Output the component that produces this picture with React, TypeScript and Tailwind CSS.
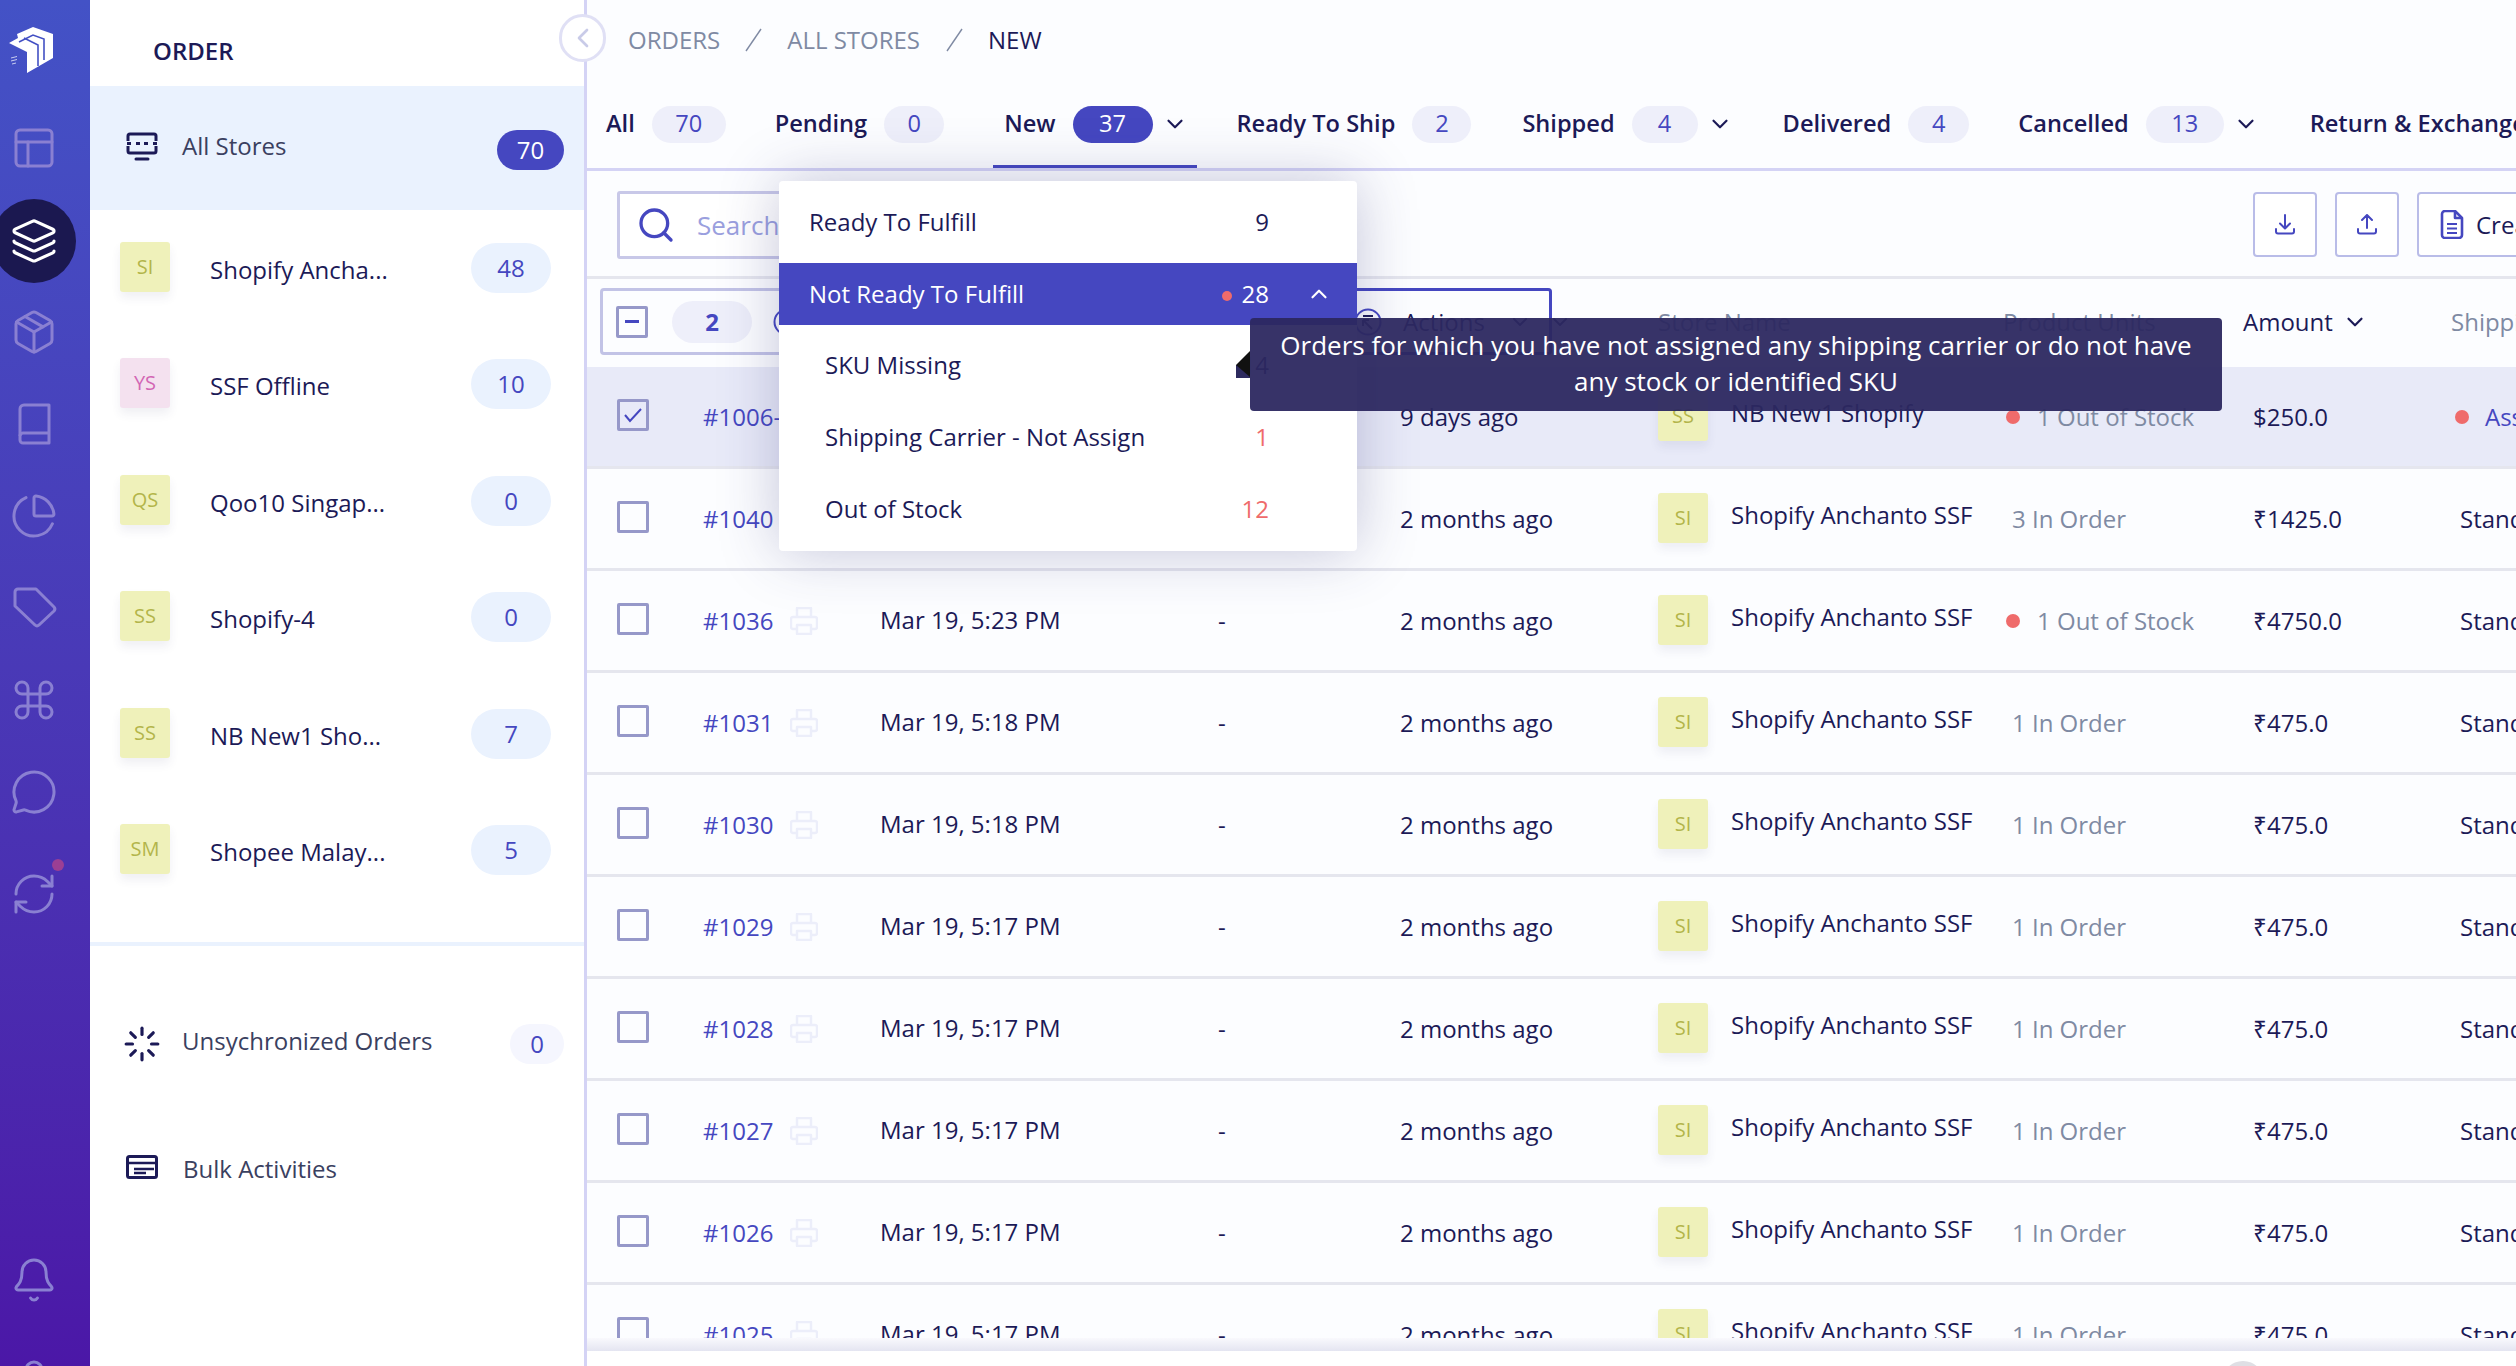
import {
  Bell, ChevronDown, ChevronLeft, ChevronUp, Command, Layers, Loader, MessageCircle,
  Package, PanelsTopLeft, PieChart, RefreshCw, Search, User,
} from "lucide-react";

function BookIcon() {
  return (
    <svg width="48" height="48" viewBox="0 0 48 48" fill="none" stroke="currentColor" strokeWidth="3" strokeLinejoin="round">
      <path d="M10 9a4 4 0 0 1 4-4h25v38H13a3 3 0 0 1-3-3z" />
      <path d="M39 33H13a3 3 0 0 0-3 3" />
    </svg>
  );
}

function TagIcon() {
  return (
    <svg width="48" height="48" viewBox="0 0 48 48" fill="none" stroke="currentColor" strokeWidth="3" strokeLinejoin="round">
      <path d="M5 9a3 3 0 0 1 3-3h18l18 18a3 3 0 0 1 0 4L29 42a3 3 0 0 1-4 0L5 23z" />
    </svg>
  );
}

const RAIL_ICONS = [
  { icon: PanelsTopLeft, mt: "mt-[24px]" },
  { icon: Package, mt: "mt-[136px]" },
  { icon: BookIcon, mt: "mt-[44px]" },
  { icon: PieChart, mt: "mt-[44px]" },
  { icon: TagIcon, mt: "mt-[43px]" },
  { icon: Command, mt: "mt-[45px]" },
  { icon: MessageCircle, mt: "mt-[44px]" },
  { icon: RefreshCw, mt: "mt-[54px]" },
  { icon: Bell, mt: "mt-[338px]" },
  { icon: User, mt: "mt-[52px]" },
];

const STORES = [
  { code: "SI", name: "Shopify Ancha...", count: 48, pink: false },
  { code: "YS", name: "SSF Offline", count: 10, pink: true },
  { code: "QS", name: "Qoo10 Singap...", count: 0, pink: false },
  { code: "SS", name: "Shopify-4", count: 0, pink: false },
  { code: "SS", name: "NB New1 Sho...", count: 7, pink: false },
  { code: "SM", name: "Shopee Malay...", count: 5, pink: false },
];

const TABS = [
  { label: "All", count: 70, ml: "ml-[19px]", w: "w-[74px]", chevron: false, active: false },
  { label: "Pending", count: 0, ml: "ml-[49px]", w: "w-[60px]", chevron: false, active: false },
  { label: "New", count: 37, ml: "ml-[60px]", w: "w-[80px]", chevron: true, active: true },
  { label: "Ready To Ship", count: 2, ml: "ml-[62px]", w: "w-[59px]", chevron: false, active: false },
  { label: "Shipped", count: 4, ml: "ml-[51px]", w: "w-[66px]", chevron: true, active: false },
  { label: "Delivered", count: 4, ml: "ml-[63px]", w: "w-[61px]", chevron: false, active: false },
  { label: "Cancelled", count: 13, ml: "ml-[49px]", w: "w-[78px]", chevron: true, active: false },
];

const ROWS = [
  { id: "#1006-", date: "", age: "9 days ago", code: "SS", store: "NB New1 Shopify", units: "1 Out of Stock", warn: true, amount: "$250.0", ship: "Assign", selected: true },
  { id: "#1040", date: "", age: "2 months ago", code: "SI", store: "Shopify Anchanto SSF", units: "3 In Order", warn: false, amount: "₹1425.0", ship: "Standard", selected: false },
  { id: "#1036", date: "Mar 19, 5:23 PM", age: "2 months ago", code: "SI", store: "Shopify Anchanto SSF", units: "1 Out of Stock", warn: true, amount: "₹4750.0", ship: "Standard", selected: false },
  { id: "#1031", date: "Mar 19, 5:18 PM", age: "2 months ago", code: "SI", store: "Shopify Anchanto SSF", units: "1 In Order", warn: false, amount: "₹475.0", ship: "Standard", selected: false },
  { id: "#1030", date: "Mar 19, 5:18 PM", age: "2 months ago", code: "SI", store: "Shopify Anchanto SSF", units: "1 In Order", warn: false, amount: "₹475.0", ship: "Standard", selected: false },
  { id: "#1029", date: "Mar 19, 5:17 PM", age: "2 months ago", code: "SI", store: "Shopify Anchanto SSF", units: "1 In Order", warn: false, amount: "₹475.0", ship: "Standard", selected: false },
  { id: "#1028", date: "Mar 19, 5:17 PM", age: "2 months ago", code: "SI", store: "Shopify Anchanto SSF", units: "1 In Order", warn: false, amount: "₹475.0", ship: "Standard", selected: false },
  { id: "#1027", date: "Mar 19, 5:17 PM", age: "2 months ago", code: "SI", store: "Shopify Anchanto SSF", units: "1 In Order", warn: false, amount: "₹475.0", ship: "Standard", selected: false },
  { id: "#1026", date: "Mar 19, 5:17 PM", age: "2 months ago", code: "SI", store: "Shopify Anchanto SSF", units: "1 In Order", warn: false, amount: "₹475.0", ship: "Standard", selected: false },
  { id: "#1025", date: "Mar 19, 5:17 PM", age: "2 months ago", code: "SI", store: "Shopify Anchanto SSF", units: "1 In Order", warn: false, amount: "₹475.0", ship: "Standard", selected: false },
];

function Logo() {
  return (
    <svg width="90" height="90" viewBox="0 0 90 90">
      <path d="M9 33 L18 28 L17 24 L33 17 L53 24 L53 48 L27 63 L27 42 Z" fill="#fff" />
      <path d="M19 32 L33 25 L44 29 L44 50" fill="none" stroke="#4350c4" strokeWidth="1.6" />
      <path d="M24 28 L38 35 L38 56" fill="none" stroke="#4350c4" strokeWidth="1.6" />
      <path d="M11 48l6-1.5M11 51l6-1.5M12 54l4-1" fill="none" stroke="#c9cdf0" strokeWidth="1" />
    </svg>
  );
}

function Rail() {
  return (
    <aside className="relative w-[90px] shrink-0 bg-linear-to-b from-[#4352c6] to-[#4b17a7] overflow-hidden">
      <div className="mt-[10px] h-[90px]">
        <Logo />
      </div>
      <div className="absolute left-[-8px] top-[199px] w-[84px] h-[84px] rounded-full bg-[#1b1850] flex items-center justify-center">
        <Layers size={48} strokeWidth={1.6} className="text-white ml-[0px]" />
      </div>
      <div className="w-[68px] flex flex-col items-center text-[#8a80d2]">
        {RAIL_ICONS.map(({ icon: Icon, mt }, i) => (
          <div key={i} className={`relative h-[48px] ${mt}`}>
            <Icon size={48} strokeWidth={1.5} />
            {i === 7 && <span className="absolute right-[-6px] top-[-11px] w-[12px] h-[12px] rounded-full bg-[#9b3f94]" />}
          </div>
        ))}
      </div>
    </aside>
  );
}

function StorePanel() {
  return (
    <section className="w-[497px] shrink-0 bg-white border-r-[3px] border-[#d4d3f5] flex flex-col text-[24px]">
      <div className="h-[86px] flex items-center pl-[63px] pt-[16px] font-semibold text-[#1c1a57]">ORDER</div>
      <div className="h-[124px] bg-[#eaf2fe] flex items-center pl-[36px] pr-[20px] text-[#3a4060]">
        <svg width="32" height="32" viewBox="0 0 32 32" fill="none" stroke="#1c1a57" strokeWidth="3" className="shrink-0 -mt-[2px]">
          <path d="M2 10V5a2 2 0 0 1 2-2h24a2 2 0 0 1 2 2v5M2 15v5a2 2 0 0 0 2 2h24a2 2 0 0 0 2-2v-5" />
          <path d="M1 12.5h4M10 12.5h4M18 12.5h4M27 12.5h4" />
          <path d="M10 28h12" strokeLinecap="round" />
        </svg>
        <span className="ml-[24px] -mt-[4px]">All Stores</span>
        <span className="ml-auto w-[67px] h-[40px] rounded-full bg-[#4547c0] text-white flex items-center justify-center mt-[3px]">70</span>
      </div>
      <div className="flex flex-col pt-[32px] gap-[66.4px]">
        {STORES.map((s) => (
          <div key={s.name} className="flex items-center h-[50px] pl-[30px]">
            <span className={`w-[50px] h-[50px] rounded-[3px] shadow-[0_6px_10px_rgba(60,60,120,0.08)] flex items-center justify-center text-[20px] ${s.pink ? "bg-[#f4e1ef] text-[#d266b4]" : "bg-[#eff1ba] text-[#b3b54a]"}`}>
              {s.code}
            </span>
            <span className="ml-[40px] mt-[6px] text-[#1c1a57]">{s.name}</span>
            <span className="ml-auto mr-[33px] mt-[2px] w-[80px] h-[50px] rounded-full bg-[#eaf2fe] text-[#4547c0] flex items-center justify-center">
              {s.count}
            </span>
          </div>
        ))}
      </div>
      <div className="h-[4px] bg-[#eaf2fe] mt-[68px] shrink-0" />
      <div className="flex items-center pl-[36px] pr-[20px] mt-[72px] text-[#3a4060]">
        <Loader size={38} strokeWidth={2} className="text-[#1c1a57] mt-[6px] -ml-[3px] -mr-[2px]" />
        <span className="ml-[23px]">Unsychronized Orders</span>
        <span className="ml-auto w-[54px] h-[40px] rounded-full bg-[#f5f6fe] text-[#4547c0] flex items-center justify-center mt-[6px]">0</span>
      </div>
      <div className="flex items-center pl-[36px] mt-[87px] text-[#3a4060]">
        <svg width="32" height="24" viewBox="0 0 32 24" fill="none" stroke="#1c1a57" strokeWidth="3" className="-mt-[4px]">
          <rect x="1.5" y="1.5" width="29" height="21" rx="2" />
          <path d="M1.5 8h29M8 14h20M8 18h12" strokeWidth="2.4" />
        </svg>
        <span className="ml-[25px]">Bulk Activities</span>
      </div>
    </section>
  );
}

function Slash({ ml }: { ml: string }) {
  return (
    <svg width="17" height="24" viewBox="0 0 17 24" fill="none" stroke="#7f8aa3" strokeWidth="1.4" className={ml}>
      <path d="M16 1L1 23" />
    </svg>
  );
}

function Breadcrumb() {
  return (
    <div className="h-[85px] flex items-center pl-[41px] pb-[5px] text-[#7f8aa3]">
      <span>ORDERS</span>
      <Slash ml="ml-[25px]" />
      <span className="ml-[25px]">ALL STORES</span>
      <Slash ml="ml-[26px]" />
      <span className="ml-[25px] text-[#1c1a57]">NEW</span>
    </div>
  );
}

function Tabs() {
  return (
    <div className="h-[86px] shrink-0 flex items-start border-b-[3px] border-[#d4d3f5] whitespace-nowrap overflow-hidden text-[23.6px]">
      {TABS.map((t) => (
        <div key={t.label} className={`relative h-[83px] flex items-center pb-[10px] pt-[5px] shrink-0 font-semibold text-[#1c1a57] ${t.ml}`}>
          {t.active && <span className="absolute left-[-11px] right-[-22px] bottom-0 h-[3px] bg-[#4547c0]" />}
          <span>{t.label}</span>
          <span className={`ml-[17px] h-[37px] rounded-full flex items-center justify-center font-normal ${t.w} ${t.active ? "bg-[#4547c0] text-white" : "bg-[#eeeffa] text-[#4547c0]"}`}>
            {t.count}
          </span>
          {t.chevron && <ChevronDown size={26} strokeWidth={2} className="ml-[9px] -mr-[13px]" />}
        </div>
      ))}
      <div className="h-[83px] flex items-center pb-[10px] pt-[5px] ml-[64px] font-semibold text-[#1c1a57]">Return &amp; Exchange</div>
    </div>
  );
}

function Toolbar() {
  return (
    <div className="h-[108px] shrink-0 flex items-start pt-[20px] pl-[30px] border-b-[3px] border-[#e5e6ee]">
      <div className="w-[500px] h-[68px] rounded-[3px] border-[3px] border-[#c8c8e8] bg-white flex items-center pl-[16px] text-[#9a9fde] text-[26px]">
        <Search size={40} strokeWidth={2} className="text-[#4547c0]" />
        <span className="ml-[21px]">Search</span>
      </div>
      <div className="ml-auto mt-[1px] flex gap-[18px] -mr-[101px]">
        <button className="w-[64px] h-[65px] rounded-[4px] border-[2.5px] border-[#b9bce8] bg-white flex items-center justify-center text-[#4547c0]">
          <svg width="20" height="21" viewBox="0 0 20 21" fill="none" stroke="currentColor" strokeWidth="2" strokeLinecap="round" strokeLinejoin="round"><path d="M10 1v13M5 9.5l5 5 5-5M1 15v2.5a2 2 0 0 0 2 2h14a2 2 0 0 0 2-2V15" /></svg>
        </button>
        <button className="w-[64px] h-[65px] rounded-[4px] border-[2.5px] border-[#b9bce8] bg-white flex items-center justify-center text-[#4547c0]">
          <svg width="20" height="21" viewBox="0 0 20 21" fill="none" stroke="currentColor" strokeWidth="2" strokeLinecap="round" strokeLinejoin="round"><path d="M10 14V1.5M5 6l5-5 5 5M1 15v2.5a2 2 0 0 0 2 2h14a2 2 0 0 0 2-2V15" /></svg>
        </button>
        <button className="w-[200px] h-[65px] rounded-[4px] border-[2.5px] border-[#b9bce8] bg-white flex items-center pl-[21px] text-[#1c1a57]">
          <svg width="24" height="29" viewBox="0 0 24 29" fill="none" stroke="#4547c0" strokeWidth="2.6" strokeLinejoin="round"><path d="M2 4a3 3 0 0 1 3-3h10l7 7v17a3 3 0 0 1-3 3H5a3 3 0 0 1-3-3z" /><path d="M15 1v7h7" /><path d="M7 14h10M7 18.5h10M7 23h10" strokeWidth="2.2" /></svg>
          <span className="ml-[12px]">Create</span>
        </button>
      </div>
    </div>
  );
}

function ActionCircle() {
  return (
    <svg width="28" height="28" viewBox="0 0 28 28" fill="none" stroke="#1c1a57" strokeWidth="2" className="shrink-0">
      <circle cx="14" cy="14" r="12.5" stroke="#4547c0" />
      <path d="M9 8h10M9 12l9 9M9 12v6M9 12h6" />
    </svg>
  );
}

function TableHead() {
  return (
    <div className="h-[88px] shrink-0 flex items-center pl-[13px] pb-[3px] whitespace-nowrap">
      <div className="relative w-[952px] h-[67px] shrink-0 rounded-[4px] border-[3px] border-[#c2c3e6] flex items-center pl-[13px]">
        <span className="absolute right-[-3px] top-[-3px] w-[210px] h-[67px] rounded-r-[4px] border-[3px] border-l-0 border-[#4547c0]" />
        <span className="w-[32px] h-[32px] rounded-[2px] border-[3px] border-[#9698c9] flex items-center justify-center">
          <span className="w-[14px] h-[3px] bg-[#4547c0]" />
        </span>
        <span className="ml-[24px] w-[80px] h-[42px] rounded-full bg-[#eeeffa] text-[#4547c0] font-bold flex items-center justify-center">2</span>
        <span className="ml-[21px]"><ActionCircle /></span>
        <span className="ml-[553px]"><ActionCircle /></span>
        <span className="ml-[21px] text-[#1c1a57]">Actions</span>
        <ChevronDown size={24} strokeWidth={2} className="ml-[23px] text-[#1c1a57]" />
      </div>
      <ChevronDown size={24} strokeWidth={2} className="ml-[-4px] shrink-0 text-[#1c1a57]" />
      <span className="ml-[86px] w-[345px] shrink-0 text-[#7f8aa3]">Store Name</span>
      <span className="w-[240px] shrink-0 text-[#7f8aa3]">Product Units</span>
      <span className="w-[208px] shrink-0 flex items-center text-[#1c1a57]">
        Amount
        <ChevronDown size={26} strokeWidth={2} className="ml-[9px]" />
      </span>
      <span className="text-[#7f8aa3]">Shipping</span>
    </div>
  );
}

function PrintIcon() {
  return (
    <svg width="28" height="28" viewBox="0 0 28 28" fill="none" stroke="#eceefa" strokeWidth="2.4" strokeLinejoin="round">
      <path d="M7 10V1h14v9" />
      <path d="M7 22H3a2 2 0 0 1-2-2v-8a2 2 0 0 1 2-2h22a2 2 0 0 1 2 2v8a2 2 0 0 1-2 2h-4" />
      <path d="M7 18h14v9H7z" />
    </svg>
  );
}

function Row({ row }: { row: (typeof ROWS)[number] }) {
  return (
    <div className={`h-[102px] shrink-0 flex items-center border-b-[3px] border-[#e5e6ee] pl-[30px] whitespace-nowrap ${row.selected ? "bg-[#e8eaf8]" : ""}`}>
      <span className="w-[86px] shrink-0 -mt-[4px]">
        <span className="w-[32px] h-[32px] rounded-[2px] border-[3px] border-[#9698c9] flex items-center justify-center">
          {row.selected && <svg width="20" height="16" viewBox="0 0 20 16" fill="none" stroke="#4547c0" strokeWidth="2"><path d="M2 8l5 6L18 2" /></svg>}
        </span>
      </span>
      <span className="w-[87px] shrink-0 text-[#4547c0]">{row.id}</span>
      <span className="w-[90px] shrink-0">
        {!row.selected && <PrintIcon />}
      </span>
      <span className="w-[338px] shrink-0 text-[#1c1a57] -mt-[2px]">{row.date}</span>
      <span className="w-[182px] shrink-0 text-[#1c1a57]">-</span>
      <span className="w-[258px] shrink-0 text-[#1c1a57]">{row.age}</span>
      <span className="w-[50px] h-[50px] shrink-0 rounded-[3px] -mt-[2px] shadow-[0_6px_10px_rgba(60,60,120,0.08)] bg-[#eff1ba] text-[#b3b54a] flex items-center justify-center text-[20px]">
        {row.code}
      </span>
      <span className="ml-[23px] w-[281px] shrink-0 text-[#1c1a57] -mt-[8px]">{row.store}</span>
      <span className="w-[241px] shrink-0 text-[#7f8aa3] flex items-center">
        {row.warn && <span className="w-[14px] h-[14px] rounded-full bg-[#ef6b6b] mr-[17px] -ml-[6px]" />}
        {row.units}
      </span>
      <span className="w-[207px] shrink-0 text-[#1c1a57]">{row.amount}</span>
      {row.warn && row.selected ? (
        <span className="flex items-center text-[#4547c0]">
          <span className="w-[14px] h-[14px] rounded-full bg-[#ef6b6b] mr-[16px] -ml-[5px]" />
          {row.ship}
        </span>
      ) : (
        <span className="text-[#1c1a57]">{row.ship}</span>
      )}
    </div>
  );
}

function StatusMenu() {
  return (
    <div className="absolute left-[779px] top-[181px] w-[578px] h-[370px] rounded-[4px] bg-white shadow-[0_0_60px_rgba(50,50,120,0.28)] text-[24px] text-[#1c1a57] overflow-hidden">
      <div className="h-[82px] flex items-center pl-[30px] pb-[1px] relative">
        Ready To Fulfill
        <span className="absolute right-[88px]">9</span>
      </div>
      <div className="h-[62px] bg-[#4547c0] text-white flex items-center pl-[30px] relative">
        Not Ready To Fulfill
        <span className="absolute right-[125px] w-[10px] h-[10px] rounded-full bg-[#ef6b6b] top-[28px]" />
        <span className="absolute right-[88px]">28</span>
        <ChevronUp size={26} strokeWidth={2} className="absolute right-[25px]" />
      </div>
      <div className="pt-[4px]">
        <div className="h-[72px] flex items-center pl-[46px] relative">
          SKU Missing
          <span className="absolute right-[88px]">14</span>
        </div>
        <div className="h-[72px] flex items-center pl-[46px] relative">
          Shipping Carrier - Not Assign
          <span className="absolute right-[88px] text-[#ef6b6b]">1</span>
        </div>
        <div className="h-[72px] flex items-center pl-[46px] relative">
          Out of Stock
          <span className="absolute right-[88px] text-[#ef6b6b]">12</span>
        </div>
      </div>
    </div>
  );
}

function Tip() {
  return (
    <>
      <div className="absolute left-[1250px] top-[318px] w-[972px] h-[93px] rounded-[4px] bg-[#2c2860]/95 text-white text-[26px] leading-[36px] text-center flex items-center justify-center px-[20px]">
        <span className="-mt-[3px]">Orders for which you have not assigned any shipping carrier or do not have any stock or identified SKU</span>
      </div>
      <svg className="absolute left-[1236px] top-[351px]" width="14" height="27" viewBox="0 0 14 27">
        <rect x="0" y="14" width="14" height="13" fill="#2d2a5e" />
        <path d="M14 0 L0 14 L14 26 Z" fill="#111" />
      </svg>
    </>
  );
}

export default function App() {
  return (
    <div className="relative w-[2516px] h-[1366px] overflow-hidden flex bg-white font-['Open_Sans',sans-serif]">
      <Rail />
      <StorePanel />
      <main className="flex-1 min-w-0 bg-[#fcfdff] flex flex-col text-[24px] overflow-hidden">
        <Breadcrumb />
        <Tabs />
        <Toolbar />
        <TableHead />
        <div className="h-[984px] shrink-0 flex flex-col overflow-hidden">
          {ROWS.map((r) => <Row key={r.id} row={r} />)}
        </div>
        <div className="relative z-10 h-[13px] shrink-0 -mt-[13px] bg-linear-to-b from-[#f9f9fd] to-[#e4e5f1]" />
        <div className="flex-1 bg-white" />
      </main>
      <div className="absolute left-[559px] top-[14px] w-[47px] h-[48px] rounded-full border-[3px] border-[#e0e0f5] bg-white flex items-center justify-center">
        <ChevronLeft size={32} strokeWidth={2} className="text-[#c9cbe8]" />
      </div>
      <StatusMenu />
      <Tip />
      <div className="absolute left-[2222px] top-[1361px] w-[42px] h-[42px] rounded-full bg-[#dfdfe4]" />
    </div>
  );
}
